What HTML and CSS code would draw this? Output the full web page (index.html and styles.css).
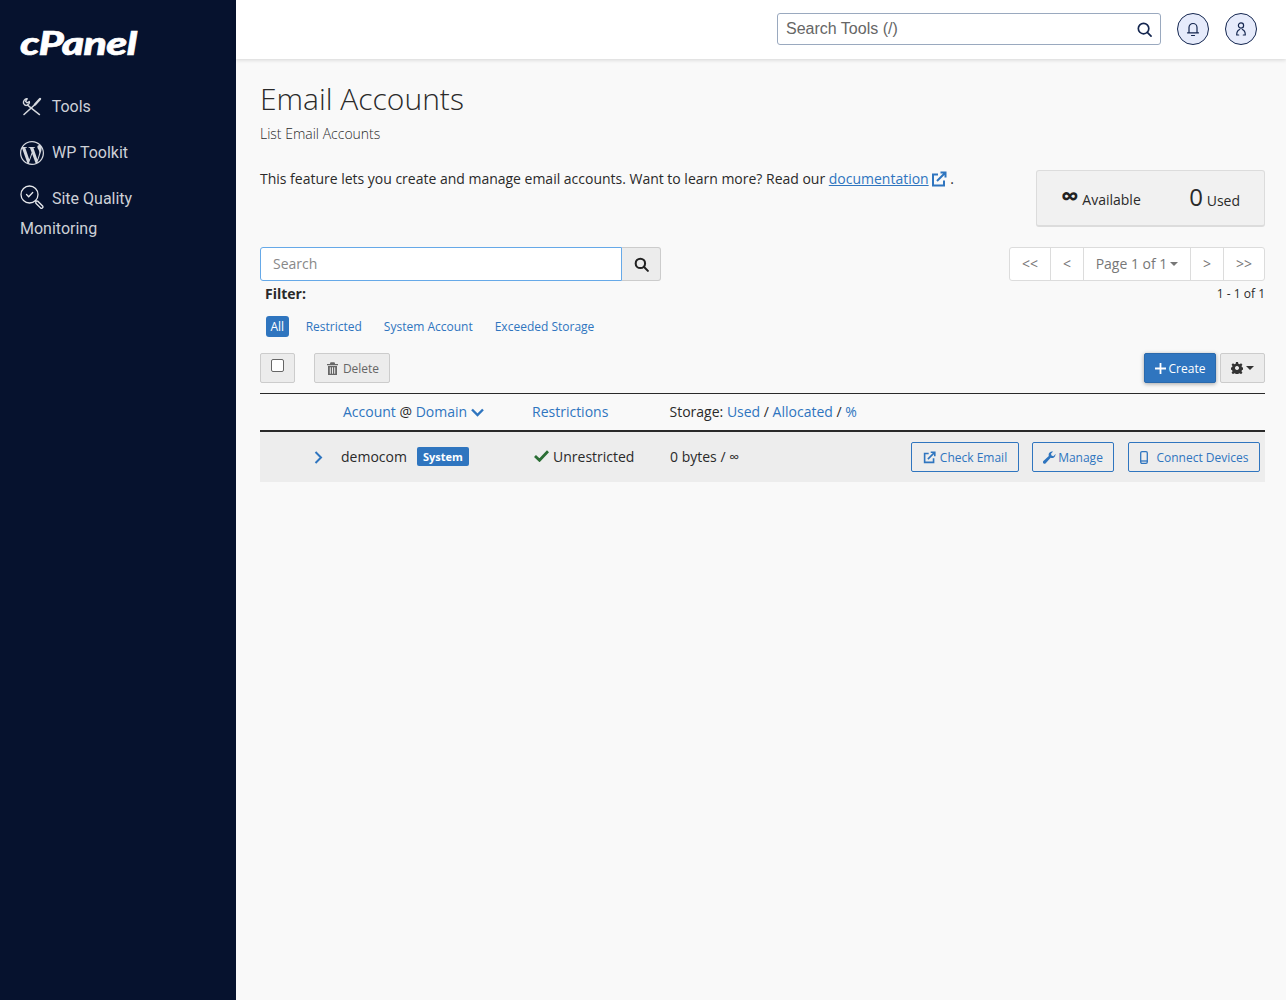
FILE: index.html
```html
<!DOCTYPE html>
<html lang="en">
<head>
  <meta charset="UTF-8">
  <title>Email Accounts</title>
  <link rel="stylesheet" href="styles.css">
</head>
<body>
  <aside class="sidebar">
    <div class="logo">cPanel</div>
    <nav class="side-nav">
      <a class="side-item" href="#">
        <svg class="side-icon" viewBox="0 0 24 24" fill="none" stroke="#d5d8de" stroke-width="1.400" stroke-linecap="round" stroke-linejoin="round"><path d="M7 3.800c-2.500.3-4 2.300-3.500 4.500c.8 1.700 2.500 2.500 4 1.800l12 9.500"/><path d="M7 3.800l-1.500 2.500l1.500 1.500l2.300-1.300c.3 1.300-.3 2.700-1.800 3.300"/><path d="M4 19.500l10.500-9.500" stroke-width="1.600"/><path d="M15 9.500l5-5.500" stroke-width="2.400"/></svg>
        <span>Tools</span>
      </a>
      <a class="side-item" href="#">
        <svg class="side-icon" viewBox="0 0 24 24" fill="#d5d8de"><path d="M21.469 6.825c.84 1.537 1.318 3.3 1.318 5.175 0 3.979-2.156 7.456-5.363 9.325l3.295-9.527c.615-1.54.82-2.771.82-3.864 0-.405-.026-.78-.07-1.11m-7.981.105c.647-.03 1.232-.105 1.232-.105.582-.075.514-.93-.067-.899 0 0-1.755.135-2.88.135-1.064 0-2.85-.15-2.85-.15-.585-.03-.661.855-.075.885 0 0 .54.061 1.125.09l1.68 4.605-2.37 7.08L5.354 6.9c.649-.03 1.234-.1 1.234-.1.585-.075.516-.93-.065-.896 0 0-1.746.138-2.874.138-.2 0-.438-.008-.69-.015C4.911 3.15 8.235 1.215 12 1.215c2.809 0 5.365 1.072 7.286 2.833-.046-.003-.091-.009-.141-.009-1.06 0-1.812.923-1.812 1.914 0 .89.513 1.643 1.06 2.531.411.72.89 1.643.89 2.977 0 .915-.354 1.994-.821 3.479l-1.075 3.585-3.9-11.61.001.014zM12 22.784c-1.059 0-2.081-.153-3.048-.437l3.237-9.406 3.315 9.087c.024.053.05.101.078.149-1.12.393-2.325.609-3.582.609M1.211 12c0-1.564.336-3.05.935-4.39L7.29 21.709C3.694 19.96 1.212 16.271 1.211 12M12 0C5.385 0 0 5.385 0 12s5.385 12 12 12 12-5.385 12-12S18.615 0 12 0"/></svg>
        <span>WP Toolkit</span>
      </a>
      <a class="side-item" href="#">
        <svg class="side-icon side-icon-quality" viewBox="0 0 24 24" fill="none" stroke="#e6e8ec" stroke-width="1.300"><circle cx="9.500" cy="9.500" r="8.500"/><path d="M6.500 9.500l2.200 2.200l4-4.200" stroke-linecap="round"/><path d="M15.800 15.800l2 .4l5 5a1.500 1.500 0 0 1 -2 2l-5 -5z"/></svg>
        <span>Site Quality<br>Monitoring</span>
      </a>
    </nav>
  </aside>

  <div class="content">
    <header class="topbar">
      <div class="tool-search">
        <span>Search Tools (/)</span>
        <svg width="15" height="15" viewBox="0 0 16 16" fill="none" stroke="#14264f" stroke-width="1.800"><circle cx="7" cy="7" r="5.600"/><path d="M11 11l4 4" stroke-linecap="round"/></svg>
      </div>
      <button class="round-btn">
        <svg width="14" height="16" viewBox="0 0 14 16" fill="none" stroke="#14264f" stroke-width="1.200"><path d="M3 11.500v-5a4 4 0 0 1 8 0v5M1.500 11.800h11M5.500 14.500h3" stroke-linecap="round"/></svg>
      </button>
      <button class="round-btn">
        <svg width="14" height="16" viewBox="0 0 14 16" fill="none" stroke="#14264f" stroke-width="1.200"><circle cx="7" cy="4.500" r="2.600"/><path d="M2.700 14c0-2.800 1.500-5 3-5.500M11.300 14c0-2.800-1.500-5-3-5.500M2.700 14h2M11.300 14h-2" stroke-linecap="round"/></svg>
      </button>
    </header>

    <main class="page">
      <h1>Email Accounts</h1>
      <p class="subtitle">List Email Accounts</p>

      <div class="intro-row">
        <p class="intro">This feature lets you create and manage email accounts. Want to learn more? Read our <a href="#">documentation</a><svg class="doc-icon" width="16" height="16" viewBox="0 0 16 16" fill="none" stroke="#2f75bf" stroke-width="2"><path d="M7 3.500h-5v11h11v-5"/><path d="M6 10l8-8M9.500 1.500h5v5"/></svg> .</p>
        <div class="stats">
          <span class="stat"><span class="inf">∞</span> Available</span>
          <span class="stat"><span class="big">0</span> Used</span>
        </div>
      </div>

      <div class="search-row">
        <div class="search-group">
          <div class="search-input">Search</div>
          <div class="search-btn">
            <svg width="15" height="15" viewBox="0 0 16 16" fill="none" stroke="#222" stroke-width="2.200"><circle cx="6.800" cy="6.800" r="5"/><path d="M10.500 10.500l4.300 4.300" stroke-linecap="round"/></svg>
          </div>
        </div>
        <div class="pager">
          <span class="pg pg-first">&lt;&lt;</span>
          <span class="pg pg-prev">&lt;</span>
          <span class="pg pg-page">Page 1 of 1<i class="caret"></i></span>
          <span class="pg pg-next">&gt;</span>
          <span class="pg pg-last">&gt;&gt;</span>
        </div>
      </div>

      <div class="filter-row">
        <strong class="filter-label">Filter:</strong>
        <span class="range">1 - 1 of 1</span>
      </div>

      <div class="filters">
        <a class="filter active" href="#">All</a>
        <a class="filter" href="#">Restricted</a>
        <a class="filter" href="#">System Account</a>
        <a class="filter" href="#">Exceeded Storage</a>
      </div>

      <div class="toolbar">
        <div class="check-btn"><span class="checkbox"></span></div>
        <div class="delete-btn">
          <svg width="11" height="13" viewBox="0 0 11 13" fill="#666"><path d="M0 2h11v1.300h-11zM3.500 .3h4l.6 1.700h-5.200zM1 4h9v9h-9zM2.800 5.200v6.500h1v-6.500zM5 5.200v6.500h1v-6.500zM7.200 5.200v6.500h1v-6.500z" fill-rule="evenodd"/></svg>
          Delete
        </div>
        <div class="toolbar-right">
          <a class="create-btn" href="#">
            <svg width="11" height="11" viewBox="0 0 11 11" stroke="#fff" stroke-width="1.800"><path d="M5.500 0v11M0 5.500h11"/></svg>
            Create
          </a>
          <div class="gear-btn">
            <svg width="12" height="12" viewBox="0 0 24 24" fill="#333" fill-rule="evenodd"><path d="M10 0h4l.7 3.400l2.500 1l2.900-1.900l2.800 2.800l-1.900 2.900l1 2.500l3.400.7v4l-3.400.7l-1 2.500l1.900 2.900l-2.800 2.800l-2.900-1.900l-2.500 1l-.7 3.400h-4l-.7-3.400l-2.500-1l-2.900 1.900l-2.800-2.800l1.900-2.900l-1-2.500l-3.400-.7v-4l3.400-.7l1-2.500l-1.900-2.900l2.800-2.800l2.900 1.900l2.500-1zM12 8a4 4 0 1 0 .01 0z"/></svg>
            <i class="caret caret-dark"></i>
          </div>
        </div>
      </div>

      <div class="table-head">
        <div class="col-account"><a href="#">Account</a> @ <a href="#">Domain</a>
          <svg width="13" height="9" viewBox="0 0 13 9" fill="none" stroke="#2f75bf" stroke-width="2.400"><path d="M1 1.500l5.500 5.500l5.500-5.500"/></svg>
        </div>
        <div class="col-restrict"><a href="#">Restrictions</a></div>
        <div class="col-storage">Storage: <a href="#">Used</a> / <a href="#">Allocated</a> / <a href="#">%</a></div>
      </div>

      <div class="table-row">
        <svg class="expand" width="9" height="13" viewBox="0 0 9 13" fill="none" stroke="#2f75bf" stroke-width="2"><path d="M1.500 1l5.500 5.500l-5.500 5.500"/></svg>
        <div class="cell-account">
          <span class="account-name">democom</span>
          <span class="badge">System</span>
        </div>
        <div class="cell-restrict">
          <svg width="15" height="12" viewBox="0 0 15 12" fill="none" stroke="#2b6e35" stroke-width="2.800"><path d="M1 6l4.500 4.300l8.500-9"/></svg>
          Unrestricted
        </div>
        <div class="cell-storage">0 bytes / ∞</div>
        <div class="row-actions">
          <a class="outline-btn btn-check" href="#">
            <svg width="13" height="13" viewBox="0 0 16 16" fill="none" stroke="#2f75bf" stroke-width="2"><path d="M7 3h-5v11h11v-5"/><path d="M6 10l8-8M9.500 1.500h5v5"/></svg>
            Check Email
          </a>
          <a class="outline-btn btn-manage" href="#">
            <svg width="13" height="13" viewBox="0 0 24 24" fill="#2f75bf"><path d="M23 6.500a6.500 6.500 0 0 1 -8.800 6.100l-9.200 10a3 3 0 0 1 -4.300-4.200l10-9.200a6.500 6.500 0 0 1 8-8.200l-4 4l1 3.500l3.500 1l4-4c.5.600.8 1.200.8 1z"/></svg>
            Manage
          </a>
          <a class="outline-btn btn-devices" href="#">
            <svg width="8" height="13" viewBox="0 0 8 13" fill="none" stroke="#2f75bf" stroke-width="1.300"><rect x=".7" y=".7" width="6.600" height="11.600" rx="1.300"/><path d="M.7 10h6.600"/></svg>
            Connect Devices
          </a>
        </div>
      </div>
    </main>
  </div>
</body>
</html>
```

FILE: styles.css
```css
* {
  box-sizing: border-box;
}

html, body {
  height: 100%;
}

body {
  margin: 0;
  display: flex;
  min-height: 1000px;
  font-family: 'Open Sans', sans-serif;
  font-size: 14px;
  color: #2a2a2a;
  background: #f9f9f9;
}

a {
  color: #2f75bf;
  text-decoration: none;
}

/* sidebar */
.sidebar {
  flex: 0 0 236px;
  background: #06122e;
  padding: 23px 20px 0;
  font-family: Roboto, sans-serif;
}

.logo {
  font-family: Lato, sans-serif;
  font-weight: 900;
  font-style: italic;
  font-size: 33px;
  line-height: 38px;
  letter-spacing: -0.5px;
  color: #fff;
  -webkit-text-stroke: 0.6px #fff;
  transform: scaleX(1.3);
  transform-origin: left center;
}

.side-nav {
  margin-top: 31px;
}

.side-item {
  display: block;
  color: #cdd0d7;
  font-size: 16px;
  line-height: 30px;
  margin-bottom: 16px;
}

.side-icon {
  width: 24px;
  height: 24px;
  margin-right: 4px;
  vertical-align: -7px;
}

.side-icon-quality {
  vertical-align: -5px;
}

/* top bar */
.content {
  flex: 1;
  min-width: 0;
}

.topbar {
  height: 59px;
  background: #fff;
  box-shadow: 0 1px 4px rgba(0, 0, 0, 0.15);
  display: flex;
  align-items: center;
  justify-content: flex-end;
  gap: 16px;
  padding: 0 29px 1px 0;
}

.tool-search {
  width: 384px;
  height: 32px;
  border: 1px solid #9aa9bf;
  border-radius: 3px;
  background: #fff;
  display: flex;
  align-items: center;
  justify-content: space-between;
  padding: 0 8px;
  font-family: 'Liberation Sans', sans-serif;
  font-size: 16px;
  color: #666;
}

.round-btn {
  width: 32px;
  height: 32px;
  padding: 0;
  border: 1px solid #14264f;
  border-radius: 50%;
  background: #e6ebfb;
  display: flex;
  align-items: center;
  justify-content: center;
}

/* page */
.page {
  padding: 0 21px 0 24px;
}

h1 {
  margin: 0;
  padding-top: 19px;
  font-size: 30px;
  line-height: 42px;
  font-weight: 300;
  color: #2a2a2a;
}

.subtitle {
  margin: 4px 0 0;
  font-size: 14px;
  line-height: 20px;
  font-weight: 300;
}

.intro-row {
  display: flex;
  justify-content: space-between;
  align-items: flex-start;
  margin-top: 24px;
}

.intro {
  margin: 0;
  line-height: 22px;
  letter-spacing: -0.01px;
}

.intro a {
  text-decoration: underline;
}

.doc-icon {
  margin-left: 2px;
  vertical-align: -3px;
}

.stats {
  width: 229px;
  height: 57px;
  margin-top: 2px;
  background: #f1f1f1;
  border: 1px solid #dcdcdc;
  border-bottom-width: 2px;
  border-radius: 3px;
  display: flex;
  justify-content: space-between;
  align-items: center;
  padding: 0 24px 2px 24px;
}

.stat {
  white-space: nowrap;
}

.inf {
  font-size: 25px;
  line-height: 20px;
  font-weight: 700;
  color: #222;
}

.big {
  font-size: 24px;
  line-height: 24px;
}

.search-row {
  display: flex;
  justify-content: space-between;
  margin-top: 20px;
}

.search-group {
  display: flex;
  width: 401px;
  height: 34px;
}

.search-input {
  flex: 1;
  border: 1px solid #66a9e8;
  border-radius: 3px 0 0 3px;
  background: #fff;
  padding: 0 12px;
  line-height: 32px;
  color: #888;
}

.search-btn {
  width: 39px;
  border: 1px solid #ccc;
  border-left: none;
  border-radius: 0 3px 3px 0;
  background: #ececec;
  display: flex;
  align-items: center;
  justify-content: center;
}

.pager {
  display: flex;
  height: 34px;
  border: 1px solid #dcdcdc;
  border-radius: 3px;
  background: #fff;
  color: #777;
}

.pg {
  display: flex;
  align-items: center;
  justify-content: center;
  height: 100%;
  padding-bottom: 1px;
  border-left: 1px solid #dcdcdc;
}

.pg:first-child {
  border-left: none;
}

.pg-first { width: 40px; }
.pg-prev { width: 33px; }
.pg-page { width: 107px; }
.pg-next { width: 33px; }
.pg-last { width: 41px; }

.caret {
  display: inline-block;
  margin-left: 3px;
  border-top: 4px solid #777;
  border-left: 4px solid transparent;
  border-right: 4px solid transparent;
}

.caret-dark {
  border-top-color: #333;
}

.filter-row {
  display: flex;
  justify-content: space-between;
  align-items: center;
  height: 20px;
  margin-top: 2px;
  padding-left: 5px;
}

.filter-label {
  font-weight: 700;
}

.range {
  font-size: 12px;
}

.filters {
  display: flex;
  align-items: center;
  gap: 22px;
  margin-top: 13px;
  padding-left: 6px;
  font-size: 12px;
}

.filter {
  line-height: 21px;
}

.filter.active {
  background: #2f75bf;
  color: #fff;
  border-radius: 3px;
  padding: 0 4.5px;
  margin-right: -5px;
}

.toolbar {
  display: flex;
  align-items: center;
  height: 30px;
  margin-top: 16px;
}

.check-btn {
  width: 35px;
  height: 30px;
  border: 1px solid #ccc;
  border-radius: 2px;
  background: #ececec;
  padding: 5px 0 0 10px;
}

.checkbox {
  display: block;
  width: 13px;
  height: 13px;
  border: 1px solid #666;
  border-radius: 2px;
  background: #fff;
}

.delete-btn {
  width: 76px;
  height: 30px;
  margin-left: 19px;
  border: 1px solid #ccc;
  border-radius: 2px;
  background: #ececec;
  display: flex;
  align-items: center;
  justify-content: center;
  gap: 5px;
  font-size: 12px;
  color: #666;
  padding-left: 2px;
}

.toolbar-right {
  margin-left: auto;
  display: flex;
  gap: 4px;
}

.create-btn {
  width: 72px;
  height: 30px;
  background: #2f75bf;
  border: 1px solid #2a69ac;
  border-radius: 2px;
  box-shadow: 0 1px 4px rgba(0, 0, 0, 0.35);
  color: #fff;
  font-size: 12px;
  display: flex;
  align-items: center;
  justify-content: center;
  gap: 3px;
}

.gear-btn {
  width: 45px;
  height: 30px;
  border: 1px solid #ccc;
  border-radius: 2px;
  background: #ececec;
  display: flex;
  align-items: center;
  justify-content: center;
}

.table-head {
  display: flex;
  align-items: center;
  height: 39px;
  margin-top: 10px;
  padding-bottom: 1px;
  border-top: 1px solid #2a2a2a;
  border-bottom: 2px solid #2a2a2a;
}

.col-account {
  width: 272px;
  padding-left: 83px;
}

.col-restrict {
  width: 137.5px;
}

.table-row {
  display: flex;
  align-items: center;
  height: 50px;
  background: #ededed;
  padding-right: 5px;
}

.expand {
  margin-left: 54px;
}

.cell-account {
  width: 211px;
  padding-left: 18px;
  display: flex;
  align-items: center;
  gap: 10px;
}

.account-name {
  margin-top: -1px;
}

.badge {
  background: #2f75bf;
  color: #fff;
  border-radius: 2px;
  font-size: 11px;
  font-weight: 700;
  line-height: 19px;
  padding: 0 6px;
  margin-bottom: 2px;
}

.cell-restrict {
  width: 136px;
  display: flex;
  align-items: center;
  gap: 4px;
  margin-bottom: 2px;
}

.cell-storage {
  margin-bottom: 2px;
}

.row-actions {
  margin-left: auto;
  display: flex;
  gap: 14px;
}

.outline-btn {
  height: 30px;
  border: 1px solid #2f75bf;
  border-radius: 2px;
  font-size: 12px;
  display: flex;
  align-items: center;
  justify-content: center;
  gap: 4px;
}

.btn-check { width: 108px; margin-right: -1px; }
.btn-manage { width: 82px; gap: 2px; }
.btn-devices { width: 132px; gap: 8px; padding-left: 1px; }
```
